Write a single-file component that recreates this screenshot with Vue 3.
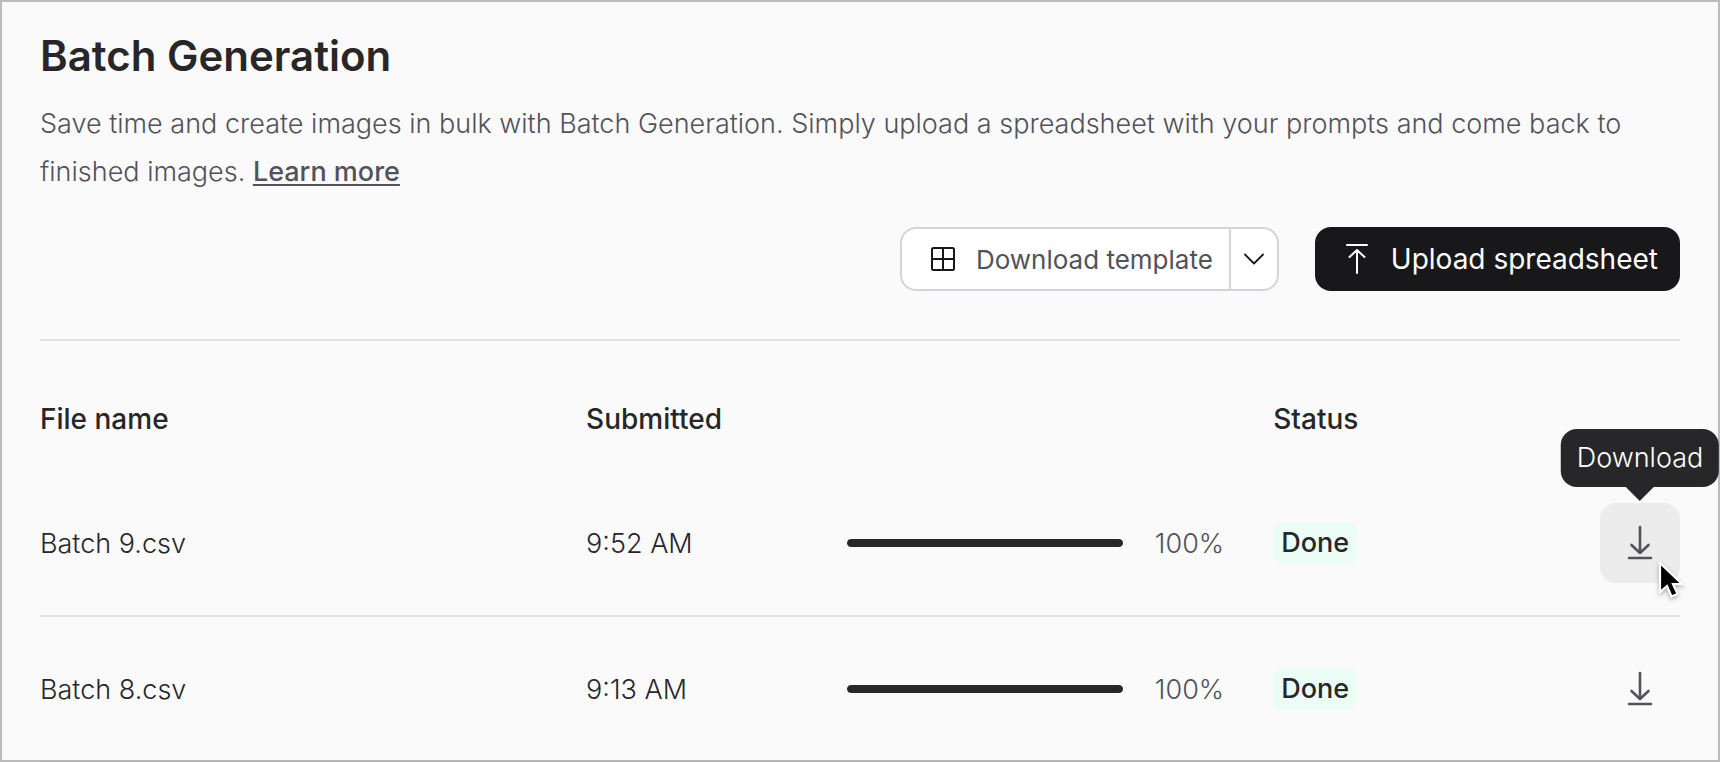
<script setup>
const batches = [
  { name: 'Batch 9.csv', submitted: '9:52 AM', progress: 100, status: 'Done', hovered: true },
  { name: 'Batch 8.csv', submitted: '9:13 AM', progress: 100, status: 'Done', hovered: false },
]
</script>

<template>
  <main class="page">
    <header class="intro">
      <h1>Batch Generation</h1>
      <p>
        Save time and create images in bulk with Batch Generation. Simply upload a spreadsheet with your prompts and come back to finished images.
        <a href="#learn-more">Learn more</a>
      </p>
    </header>

    <div class="actions">
      <div class="split">
        <button type="button" class="split-main">
          <svg width="26" height="26" viewBox="0 0 26 26" fill="none" stroke="currentColor" stroke-width="2" aria-hidden="true">
            <rect x="2" y="2" width="22" height="22" rx="1.5" />
            <path d="M13 2v22M2 13h22" />
          </svg>
          <span>Download template</span>
        </button>
        <button type="button" class="split-toggle" aria-label="More templates">
          <svg width="20" height="12" viewBox="0 0 20 12" fill="none" stroke="currentColor" stroke-width="1.8" stroke-linecap="round" stroke-linejoin="round" aria-hidden="true">
            <path d="M1 1.5 10 10.5 19 1.5" />
          </svg>
        </button>
      </div>
      <button type="button" class="upload">
        <svg width="24" height="32" viewBox="0 0 24 32" fill="none" stroke="currentColor" stroke-width="2" stroke-linecap="round" stroke-linejoin="round" aria-hidden="true">
          <path d="M2 2h20M12 30V7M4.500 14 12 7l7.500 7" />
        </svg>
        <span>Upload spreadsheet</span>
      </button>
    </div>

    <table>
      <colgroup>
        <col class="col-name" />
        <col class="col-time" />
        <col class="col-progress" />
        <col />
      </colgroup>
      <thead>
        <tr>
          <th scope="col">File name</th>
          <th scope="col" colspan="2">Submitted</th>
          <th scope="col">Status</th>
        </tr>
      </thead>
      <tbody>
        <tr v-for="batch in batches" :key="batch.name">
          <td>{{ batch.name }}</td>
          <td>{{ batch.submitted }}</td>
          <td>
            <div class="progress">
              <div class="track" role="progressbar" aria-label="Progress" :aria-valuenow="batch.progress">
                <div class="fill" :style="{ width: batch.progress + '%' }"></div>
              </div>
              <span class="percent">{{ batch.progress }}%</span>
            </div>
          </td>
          <td>
            <div class="status">
              <span class="badge">{{ batch.status }}</span>
              <button type="button" class="download" :class="{ hovered: batch.hovered }" aria-label="Download">
                <svg width="26" height="36" viewBox="0 0 26 36" fill="none" stroke="currentColor" stroke-width="2.600" stroke-linecap="round" stroke-linejoin="round" aria-hidden="true">
                  <path d="M13 2v26M4.500 20 13 28l8.500-8M2 33h22" />
                </svg>
                <span v-if="batch.hovered" class="tooltip" role="tooltip">Download</span>
                <svg v-if="batch.hovered" class="cursor" width="30" height="42" viewBox="0 0 30 42" aria-hidden="true">
                  <path d="M4 4v29l7-6 4.500 10.500 6-2.600L17 25h9Z" fill="#000" stroke="#fff" stroke-width="2.200" />
                </svg>
              </button>
            </div>
          </td>
        </tr>
      </tbody>
    </table>
  </main>
</template>

<style>
body {
  margin: 0;
  background: #fafafa;
}
</style>

<style scoped>
.page {
  box-sizing: border-box;
  height: 100vh;
  padding: 32px 40px 0;
  overflow: hidden;
  background: #fafafa;
  color: #27272a;
  font-family: Inter, "Liberation Sans", sans-serif;
  font-size: 27px;
  font-weight: 300;
}

.page::after {
  content: "";
  position: fixed;
  inset: 0;
  border: 2px solid rgba(0, 0, 0, 0.25);
  pointer-events: none;
}

h1 {
  margin: 0;
  font-size: 42px;
  font-weight: 600;
  line-height: 48px;
}

p {
  margin: 20px 0 0;
  color: #52525b;
  line-height: 48px;
}

a {
  color: inherit;
  font-weight: 500;
  text-decoration-thickness: 2px;
  text-underline-offset: 3px;
}

button {
  border: 0;
  background: none;
  color: inherit;
  font: inherit;
  white-space: nowrap;
}

.actions {
  display: flex;
  justify-content: flex-end;
  gap: 36px;
  margin-top: 31px;
  padding-bottom: 48px;
  border-bottom: 2px solid #e4e4e4;
}

.split {
  display: flex;
  box-sizing: border-box;
  height: 64px;
  border: 2px solid #d4d4d8;
  border-radius: 16px;
  background: #fff;
  color: #18181b;
  font-size: 26px;
  font-weight: 400;
}

.split-main {
  display: flex;
  align-items: center;
  gap: 20px;
  padding: 0 16px 0 28px;
}

.split-main span {
  color: #52525b;
}

.split-toggle {
  display: grid;
  place-items: center;
  width: 48px;
  padding: 0;
  border-left: 2px solid #d4d4d8;
}

.upload {
  display: flex;
  align-items: center;
  gap: 22px;
  height: 64px;
  padding: 0 22px 0 30px;
  border-radius: 16px;
  background: #18181b;
  color: #fff;
  font-size: 28px;
  font-weight: 400;
}

table {
  width: 100%;
  border-collapse: separate;
  border-spacing: 0;
  table-layout: fixed;
}

.col-name {
  width: 33.3%;
}

.col-time {
  width: 15.9%;
}

.col-progress {
  width: 26%;
}

th {
  box-sizing: content-box;
  height: 104px;
  padding: 26px 0 0;
  font-size: 28px;
  font-weight: 500;
  text-align: left;
}

td {
  height: 144px;
  padding: 0;
  border-bottom: 2px solid #e4e4e4;
}

.progress {
  display: flex;
  align-items: center;
}

.track {
  width: 276px;
  height: 8px;
  overflow: hidden;
  border-radius: 4px;
  background: #e4e4e7;
}

.fill {
  height: 100%;
  border-radius: 4px;
  background: #27272a;
}

.percent {
  margin-left: 32px;
  color: #52525b;
}

.status {
  display: flex;
  align-items: center;
  justify-content: space-between;
}

.badge {
  padding: 0 8px;
  border-radius: 8px;
  background: #ecfdf5;
  font-weight: 500;
  line-height: 42px;
}

.download {
  position: relative;
  display: grid;
  place-items: center;
  width: 80px;
  height: 80px;
  padding: 0;
  border-radius: 16px;
  color: #52525b;
}

.hovered {
  background: #ececec;
}

.tooltip {
  position: absolute;
  bottom: 96px;
  left: 50%;
  padding: 0 16px;
  border-radius: 16px;
  background: #27272a;
  color: #fff;
  line-height: 58px;
  transform: translateX(-50%);
}

.tooltip::after {
  content: "";
  position: absolute;
  top: 100%;
  left: 50%;
  margin-left: -14px;
  border: 14px solid transparent;
  border-top-color: #27272a;
  border-bottom: 0;
}

.cursor {
  position: absolute;
  top: 56px;
  left: 56px;
  filter: drop-shadow(0 2px 2px rgba(0, 0, 0, 0.3));
}
</style>
